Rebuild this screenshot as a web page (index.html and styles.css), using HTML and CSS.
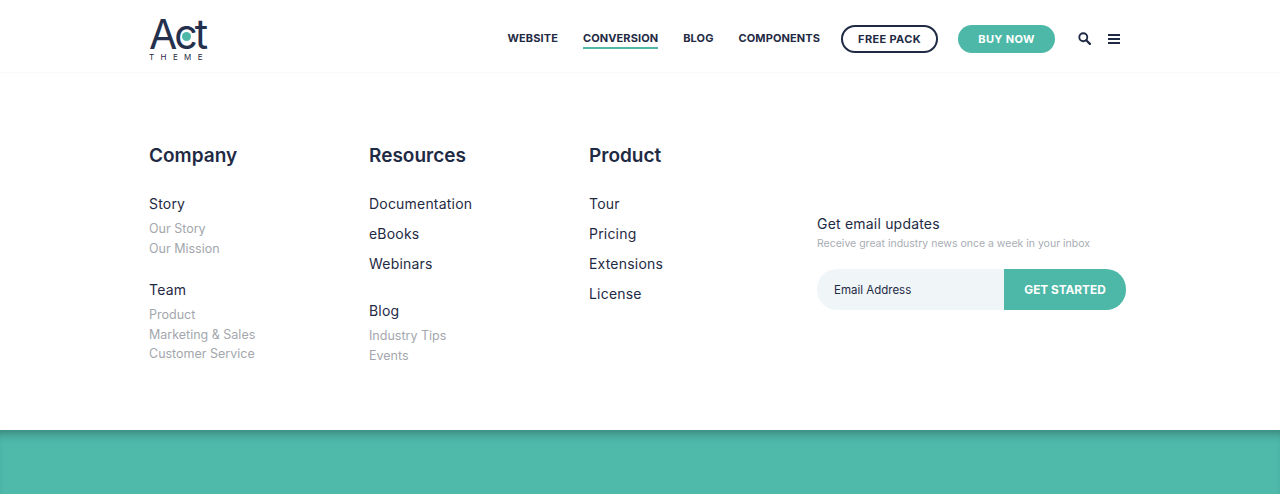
FILE: index.html
```html
<!DOCTYPE html>
<html lang="en">
<head>
  <meta charset="UTF-8">
  <title>Act Theme</title>
  <link rel="stylesheet" href="styles.css">
</head>
<body>
  <header class="site-header">
    <a class="logo" href="#">
      <span class="logo-word">Act<span class="logo-dot"></span></span>
      <span class="logo-sub">THEME</span>
    </a>
    <nav class="main-nav">
      <a href="#">WEBSITE</a>
      <a href="#" class="active">CONVERSION</a>
      <a href="#">BLOG</a>
      <a href="#">COMPONENTS</a>
    </nav>
    <a href="#" class="btn btn-outline">FREE PACK</a>
    <a href="#" class="btn btn-fill">BUY NOW</a>
    <svg class="icon-search" width="13" height="13" viewBox="0 0 14 14" fill="none" stroke="#1f2a44">
      <circle cx="5.7" cy="5.7" r="4.3" stroke-width="2"/>
      <path d="M8.9 8.9L12.8 12.8" stroke-width="2.4" stroke-linecap="round"/>
    </svg>
    <div class="icon-menu"><span></span><span></span><span></span></div>
  </header>

  <main class="menu-panel">
    <section class="menu-col">
      <h2>Company</h2>
      <h3>Story</h3>
      <ul class="sub-links">
        <li>Our Story</li>
        <li>Our Mission</li>
      </ul>
      <h3 class="next-group">Team</h3>
      <ul class="sub-links">
        <li>Product</li>
        <li>Marketing &amp; Sales</li>
        <li>Customer Service</li>
      </ul>
    </section>

    <section class="menu-col">
      <h2>Resources</h2>
      <ul class="main-links">
        <li>Documentation</li>
        <li>eBooks</li>
        <li>Webinars</li>
      </ul>
      <h3 class="after-links">Blog</h3>
      <ul class="sub-links">
        <li>Industry Tips</li>
        <li>Events</li>
      </ul>
    </section>

    <section class="menu-col">
      <h2>Product</h2>
      <ul class="main-links">
        <li>Tour</li>
        <li>Pricing</li>
        <li>Extensions</li>
        <li>License</li>
      </ul>
    </section>

    <section class="signup">
      <h4>Get email updates</h4>
      <p>Receive great industry news once a week in your inbox</p>
      <form class="signup-form">
        <div class="email-field">Email Address</div>
        <button type="button">GET STARTED</button>
      </form>
    </section>
  </main>

  <div class="teal-band"></div>
</body>
</html>
```

FILE: styles.css
```css
* {
  box-sizing: border-box;
}
html, body {
  height: 494px;
  overflow: hidden;
}
body {
  margin: 0;
  font-family: Inter, 'Liberation Sans', sans-serif;
  color: #1f2a44;
  background-color: white;
}
a {
  color: inherit;
  text-decoration: none;
}
ul {
  list-style: none;
  margin: 0;
  padding: 0;
}

/* header */
.site-header {
  height: 73px;
  padding: 5px 160px 0 149px;
  display: flex;
  align-items: center;
  border-bottom: 1px solid #f9f9fa;
}
.logo {
  display: flex;
  flex-direction: column;
  width: 58px;
  margin-top: 1px;
}
.logo-word {
  position: relative;
  font-size: 41px;
  font-weight: 400;
  line-height: 34px;
  letter-spacing: -3px;
  color: #25304d;
}
.logo-dot {
  position: absolute;
  left: 33px;
  top: 15px;
  width: 9px;
  height: 9px;
  border-radius: 50%;
  background-color: #4db8a8;
}
.logo-sub {
  font-size: 8px;
  line-height: 10px;
  letter-spacing: 6.4px;
  margin-top: 1px;
  white-space: nowrap;
}
.main-nav {
  display: flex;
  gap: 25px;
  margin-left: auto;
  margin-right: 21px;
  margin-top: 2px;
}
.main-nav a {
  font-size: 11px;
  font-weight: 700;
  letter-spacing: 0.1px;
  line-height: 17px;
  border-bottom: 2px solid transparent;
}
.main-nav a.active {
  border-bottom-color: #4db8a8;
}
.btn {
  height: 28px;
  border-radius: 14px;
  display: flex;
  align-items: center;
  justify-content: center;
  font-size: 11px;
  font-weight: 700;
  letter-spacing: 0.35px;
}
.btn-outline {
  width: 97px;
  border: 2px solid #1f2a44;
  margin-right: 20px;
}
.btn-fill {
  width: 97px;
  color: white;
  background-color: #4db8a8;
  margin-right: 23px;
}
.icon-search {
  margin-right: 17px;
}
.icon-menu {
  width: 12px;
  display: flex;
  flex-direction: column;
  gap: 2px;
}
.icon-menu span {
  height: 2px;
  background-color: #1f2a44;
}

/* menu panel */
.menu-panel {
  height: 357px;
  padding: 72px 0 0 149px;
  display: flex;
}
.menu-col {
  width: 220px;
}
h2 {
  margin: 0 0 27px;
  font-size: 19px;
  font-weight: 600;
  line-height: 22px;
}
h3 {
  margin: 0;
  font-size: 14px;
  font-weight: 400;
  letter-spacing: 0.2px;
  line-height: 20px;
}
.next-group {
  margin-top: 22px;
}
.after-links {
  margin-top: 27px;
}
.sub-links {
  margin-top: 5px;
}
.sub-links li {
  font-size: 12.5px;
  line-height: 19.6px;
  color: #a3a7ad;
}
.main-links li {
  font-size: 14px;
  letter-spacing: 0.2px;
  line-height: 20px;
  margin-bottom: 10px;
}
.signup {
  margin-left: 8px;
  width: 309px;
  padding-top: 69px;
}
h4 {
  margin: 0;
  font-size: 14px;
  font-weight: 400;
  letter-spacing: 0.2px;
  line-height: 20px;
}
.signup p {
  margin: 2px 0 17px;
  font-size: 10.5px;
  line-height: 16px;
  color: #a9adb3;
}
.signup-form {
  display: flex;
  height: 41px;
}
.email-field {
  width: 187px;
  padding-left: 17px;
  display: flex;
  align-items: center;
  font-size: 11.5px;
  background-color: #f0f5f8;
  border-radius: 20px 0 0 20px;
}
.signup-form button {
  width: 122px;
  border: none;
  border-radius: 0 20px 20px 0;
  background-color: #4db8a8;
  color: white;
  font-family: inherit;
  font-size: 11.8px;
  font-weight: 700;
}

/* bottom band */
.teal-band {
  height: 64px;
  background-color: #4fb9aa;
  box-shadow: inset 0 10px 10px -6px rgba(0, 0, 0, 0.28);
}
```
